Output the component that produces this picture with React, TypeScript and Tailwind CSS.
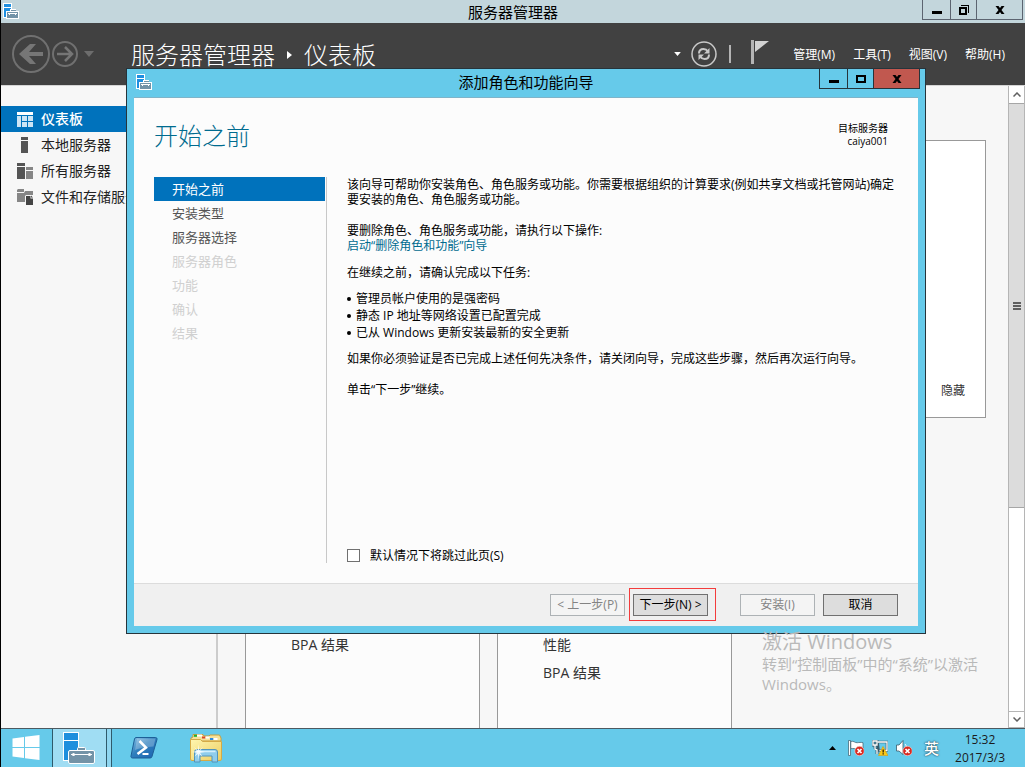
import { useState, type ReactNode } from "react";
import clsx from "clsx";

const nav_items = [
  { label: "仪表板", icon: <DashboardIcon /> },
  { label: "本地服务器", icon: <LocalServerIcon /> },
  { label: "所有服务器", icon: <AllServersIcon /> },
  { label: "文件和存储服务", icon: <StorageIcon /> },
];

const menus = ["管理(M)", "工具(T)", "视图(V)", "帮助(H)"];

const steps = [
  { label: "开始之前", enabled: true },
  { label: "安装类型", enabled: true },
  { label: "服务器选择", enabled: true },
  { label: "服务器角色", enabled: false },
  { label: "功能", enabled: false },
  { label: "确认", enabled: false },
  { label: "结果", enabled: false },
];

const tasks = [
  "管理员帐户使用的是强密码",
  "静态 IP 地址等网络设置已配置完成",
  "已从 Windows 更新安装最新的安全更新",
];

const tiles = [["BPA 结果"], ["性能", "BPA 结果"]];

/* ---------- icons ---------- */

function ManagerIcon() {
  return (
    <svg width="16" height="16" viewBox="0 0 16 16" shapeRendering="crispEdges">
      <rect width="9" height="15" fill="#fff" />
      <rect x="1" y="1" width="7" height="3" fill="#1e8fe0" />
      <rect x="1" y="5" width="7" height="9" fill="#1e8fe0" />
      <path d="M8 6h5v2h3v8H3V8h4V6z" fill="#fff" />
      <path d="M8 7h5v1H8zM4 9h11v6H4z" fill="#7393a7" />
      <path d="M5 10h9v1H5zM6 11h1v1H6zM12 11h1v1h-1z" fill="#fff" />
    </svg>
  );
}

function ManagerIconLarge() {
  return (
    <svg width="32" height="32" viewBox="0 0 32 32">
      <rect x="0.5" y="0.5" width="15" height="28" fill="#1e8fdd" stroke="#fff" />
      <path d="M0 8.5h16" stroke="#fff" />
      <path d="M14.5 18v-1.500a1 1 0 0 1 1-1h6a1 1 0 0 1 1 1V18" fill="#7393a7" stroke="#fff" />
      <rect x="5.500" y="18.500" width="26" height="13" rx="1.500" fill="#7393a7" stroke="#fff" />
      <path d="M8 22.500h21" stroke="#fff" />
      <circle cx="10.500" cy="22.500" r="1.500" fill="#fff" />
      <circle cx="26.500" cy="22.500" r="1.500" fill="#fff" />
    </svg>
  );
}

function DashboardIcon() {
  return (
    <svg width="16" height="15" viewBox="0 0 16 15" shapeRendering="crispEdges">
      <path d="M0 0h16v3H0z" fill="#fff" />
      <path d="M0 4h4v11H0zM5 4h5v5H5zM11 4h5v5h-5zM5 10h5v5H5zM11 10h5v5h-5z" fill="#cde5f5" />
    </svg>
  );
}

function LocalServerIcon() {
  return (
    <svg width="16" height="16" viewBox="0 0 16 16" shapeRendering="crispEdges">
      <path d="M4 0h7v3H4zM4 4h7v12H4z" fill="#555" />
    </svg>
  );
}

function AllServersIcon() {
  return (
    <svg width="16" height="16" viewBox="0 0 16 16" shapeRendering="crispEdges">
      <path d="M0 0h8v3H0zM0 4h8v12H0z" fill="#555" />
      <path d="M9 4h7v3H9zM9 8h7v8H9z" fill="#868686" />
    </svg>
  );
}

function StorageIcon() {
  return (
    <svg width="16" height="16" viewBox="0 0 16 16">
      <path d="M0 1l1-1h6v3H0zM0 4h7l1-2h8v4H9l-1 1v6H0z" fill="#868686" />
      <path d="M9 7h4.500v2.500H16V16H9z" fill="#444" />
      <path d="M14 6.500l2 2h-2z" fill="#444" />
    </svg>
  );
}

function BackIcon() {
  return (
    <svg width="38" height="38" viewBox="0 0 38 38" fill="none">
      <circle cx="19" cy="19" r="18" stroke="#707070" strokeWidth="2" />
      <path d="M18 9h6l-7 8h14v4H17l7 8h-6L7 19z" fill="#767676" />
    </svg>
  );
}

function ForwardIcon() {
  return (
    <svg width="26" height="26" viewBox="0 0 26 26" fill="none">
      <circle cx="13" cy="13" r="12" stroke="#707070" strokeWidth="2" />
      <path d="M5 13h14M13 6l7 7-7 7" stroke="#767676" strokeWidth="2.500" />
    </svg>
  );
}

function RefreshIcon() {
  return (
    <svg width="26" height="26" viewBox="0 0 26 26" fill="none">
      <circle cx="13" cy="13" r="12" stroke="#c8c8c8" strokeWidth="1.500" />
      <path d="M8 12.500c0-3 2-4.500 4.500-4.500 2 0 3.500 1 4.500 2.500M18 13.500c0 3-2 4.500-4.500 4.500-2 0-3.500-1-4.500-2.500" stroke="#c8c8c8" strokeWidth="2" />
      <path d="M18.500 7v5.500H13zM7.500 19v-5.500H13z" fill="#c8c8c8" />
    </svg>
  );
}

function Caret({ className }: { className?: string }) {
  return (
    <svg viewBox="0 0 10 6" className={className} fill="currentColor">
      <path d="M0 0h10L5 6z" />
    </svg>
  );
}

function MinimizeGlyph() {
  return (
    <svg width="10" height="10" viewBox="0 0 10 10" shapeRendering="crispEdges">
      <path d="M0 6h10v3H0z" />
    </svg>
  );
}

function MaximizeGlyph() {
  return (
    <svg width="10" height="10" viewBox="0 0 10 10" shapeRendering="crispEdges">
      <path d="M0 1h10v8H0zM2 3v4h6V3z" fillRule="evenodd" />
    </svg>
  );
}

function RestoreGlyph() {
  return (
    <svg width="10" height="10" viewBox="0 0 10 10" shapeRendering="crispEdges">
      <path d="M0 2h8v8H0zM2 4v4h4V4z" fillRule="evenodd" />
      <path d="M2 0h8v8H9V1H2z" />
    </svg>
  );
}

function CloseGlyph() {
  return (
    <svg width="10" height="10" viewBox="0 0 10 10">
      <path d="M0.500 1h3L5 3l1.500-2h3L6.500 5l3 4h-3L5 7 3.500 9h-3l3-4z" />
    </svg>
  );
}

function StartIcon() {
  return (
    <svg width="28" height="28" viewBox="0 0 28 28" fill="#fff">
      <path d="M0.500 4.500L12 3v10H0.500zM13 2.800L27.500 1v12H13zM0.500 14H12v10L0.500 22.500zM13 14h14.500v12L13 24.200z" />
    </svg>
  );
}

function PowerShellIcon() {
  return (
    <svg width="28" height="24" viewBox="0 0 28 24">
      <defs>
        <linearGradient id="ps" x1="0" y1="0" x2="1" y2="1">
          <stop offset="0" stopColor="#8cc4e8" />
          <stop offset="0.450" stopColor="#2f7fbd" />
          <stop offset="1" stopColor="#1b62b0" />
        </linearGradient>
      </defs>
      <path d="M6 1.500h19.500a1.500 1.500 0 0 1 1.500 2l-5 17a2 2 0 0 1-2 1.500H2.500a1.500 1.500 0 0 1-1.500-2l3.500-17a2 2 0 0 1 1.500-1.500z" fill="url(#ps)" stroke="#1d5f97" />
      <path d="M7 2.500h18.500l-2 8C15 11 10 12 5 14z" fill="#fff" opacity="0.250" />
      <path d="M9.500 5l6.500 6.500L7.500 18" fill="none" stroke="#fff" strokeWidth="2.500" />
      <path d="M12.500 18h6" stroke="#fff" strokeWidth="2" />
    </svg>
  );
}

function ExplorerIcon() {
  return (
    <svg width="32" height="30" viewBox="0 0 32 30">
      <defs>
        <linearGradient id="folder" x1="0" y1="0" x2="1" y2="1">
          <stop offset="0" stopColor="#fff6b0" />
          <stop offset="1" stopColor="#ecce62" />
        </linearGradient>
      </defs>
      <path d="M1 5l2-1V1.500h10l1 1.500h5l1-1h9.500L31 5v3H1z" fill="#f6e29a" stroke="#c79f3c" />
      <path d="M4 1.800h3v2H4z" fill="#1fb02e" />
      <path d="M7 1.500h5v2H7z" fill="#fff" />
      <path d="M12 3.500h3.500v2H12z" fill="#d9482b" />
      <path d="M15.500 3.500h4v2h-4z" fill="#fff" />
      <path d="M20 5h3.500v2H20z" fill="#2b8be0" />
      <path d="M23.500 5h4v2h-4z" fill="#fff" />
      <path d="M0.500 6.500h10l2 2h19V26a1.500 1.500 0 0 1-1.500 1.500H2A1.500 1.500 0 0 1 .500 26z" fill="url(#folder)" stroke="#d5aa46" />
      <path d="M4.500 29V19a2.500 2.500 0 0 1 2.500-2.500h18a2.500 2.500 0 0 1 2.500 2.500v10h-5.500v-6h-12v6z" fill="#8fcdec" stroke="#5294ba" />
      <path d="M6.500 18.500h19" stroke="#d2effc" strokeWidth="1.500" />
      <path d="M8.500 11l.500 6.500L13 14l-3 4 5 1-5 .800 2.500 3.700-3.500-2.500L8.500 27l-.700-6-3.300 2.500 2.300-3.700L2 19l4.800-1L4 14l3.800 3.500z" fill="#fff" opacity="0.850" />
    </svg>
  );
}

function ErrorBadge() {
  return (
    <>
      <circle cx="11.500" cy="11" r="4.700" fill="#d8281f" stroke="#fbd5d0" strokeWidth="0.600" />
      <path d="M9.500 9l4 4M13.500 9l-4 4" stroke="#fff" strokeWidth="1.700" />
    </>
  );
}

function TrayFlagIcon() {
  return (
    <svg width="16" height="16" viewBox="0 0 16 16">
      <path d="M0.500 0.500h2v15h-2z" fill="#fff" stroke="#3a5b6b" strokeWidth="0.700" />
      <path d="M2.800 1.500c3-1 4 1.500 6.500 1.200 2-.200 3.500-.500 5.700 0V9c-3-.800-4 .500-6 .200-2-.300-3.500-1.200-6.200-.500z" fill="#fff" stroke="#3a5b6b" strokeWidth="0.700" />
      <ErrorBadge />
    </svg>
  );
}

function TrayNetworkIcon() {
  return (
    <svg width="16" height="16" viewBox="0 0 16 16" fill="none">
      <path d="M5.500 2h9.500v8.500H6.500z" fill="#66caea" stroke="#3a5b6b" strokeWidth="2.600" />
      <path d="M1 1h4v4H1zM3 5v3l2 2v4" stroke="#3a5b6b" strokeWidth="2.800" />
      <path d="M5.500 2h9.500v8.500H7.500M8 13h3" stroke="#fff" strokeWidth="1.300" />
      <path d="M1 1h4v4H1zM3 5v4l2 1v4" stroke="#fff" strokeWidth="1.300" />
      <path d="M11 6.500L16 15.500H6.500z" fill="#fbc916" stroke="#d99a08" strokeWidth="0.600" />
      <path d="M11.200 9.500v3M11.200 13.300v1.200" stroke="#3a2c00" strokeWidth="1.400" />
    </svg>
  );
}

function TraySpeakerIcon() {
  return (
    <svg width="16" height="16" viewBox="0 0 16 16">
      <path d="M0.500 5h2.500l4-4.500v14L3 11H0.500z" fill="#fff" stroke="#3a5b6b" strokeWidth="0.800" />
      <path d="M9 4c1 1 1.200 2 1.200 3" stroke="#fff" fill="none" />
      <ErrorBadge />
    </svg>
  );
}

/* ---------- shared pieces ---------- */

function CaptionButton({
  label,
  className,
  children,
}: {
  label: string;
  className?: string;
  children: ReactNode;
}) {
  return (
    <button
      type="button"
      aria-label={label}
      className={clsx("flex items-center justify-center border-l", className)}
    >
      {children}
    </button>
  );
}

function DialogButton({
  children,
  disabled,
}: {
  children: ReactNode;
  disabled?: boolean;
}) {
  return (
    <button
      type="button"
      disabled={disabled}
      className={clsx(
        "h-[22px] w-[75px] border text-xs leading-5 whitespace-nowrap",
        disabled
          ? "border-[#adb2b5] bg-[#f4f4f4] text-[#838383]"
          : "border-[#707070] bg-[#dddddd] text-black"
      )}
    >
      {children}
    </button>
  );
}

/* ---------- main window ---------- */

function TitleBar() {
  return (
    <div className="relative flex h-[23px] shrink-0 items-center justify-center bg-[#c3d6dc]">
      <span className="absolute left-0.5 top-[3px]">
        <ManagerIcon />
      </span>
      <h1 className="text-[15px] leading-5 text-black">服务器管理器</h1>
      <div className="absolute right-0.5 top-0 flex h-5 border-r border-b border-[#5c6470]">
        <CaptionButton label="最小化" className="w-7 border-[#5c6470]">
          <MinimizeGlyph />
        </CaptionButton>
        <CaptionButton label="还原" className="w-[26px] border-[#5c6470]">
          <RestoreGlyph />
        </CaptionButton>
        <CaptionButton label="关闭" className="w-[46px] border-[#5c6470]">
          <CloseGlyph />
        </CaptionButton>
      </div>
    </div>
  );
}

function Header() {
  return (
    <header className="flex h-[62px] shrink-0 items-center bg-[#414141] pr-5 pl-[11px] text-white">
      <button type="button" aria-label="后退">
        <BackIcon />
      </button>
      <button type="button" aria-label="前进" className="ml-0.5">
        <ForwardIcon />
      </button>
      <Caret className="ml-1.5 h-1.5 w-2.5 text-[#6d6d6d]" />
      <h2 className="ml-[37px] flex items-center pt-0.5 text-2xl leading-8 font-light whitespace-nowrap">
        服务器管理器
        <svg width="5" height="8" viewBox="0 0 5 8" className="mx-3" fill="#fff">
          <path d="M0 0l5 4-5 4z" />
        </svg>
        仪表板
      </h2>
      <div className="ml-auto flex items-center">
        <Caret className="h-1 w-[7px]" />
        <button type="button" aria-label="刷新" className="ml-2.5">
          <RefreshIcon />
        </button>
        <span className="ml-3 h-[18px] w-0.5 bg-[#b4b4b4]" />
        <button type="button" aria-label="通知" className="mb-1 ml-5">
          <svg width="18" height="24" viewBox="0 0 18 24">
            <path d="M0 0h3v24H0z" fill="#b4b4b4" />
            <path d="M4 1h14L4 12z" fill="#d2d2d2" />
          </svg>
        </button>
        <nav className="ml-6 flex gap-[18px] pt-0.5 text-xs leading-4">
          {menus.map((menu) => (
            <button type="button" key={menu} className="whitespace-nowrap">
              {menu}
            </button>
          ))}
        </nav>
      </div>
    </header>
  );
}

function Sidebar() {
  return (
    <nav className="w-[217px] shrink-0 border-r-2 border-[#cccccc] pt-5">
      <ul>
        {nav_items.map((item, i) => (
          <li key={item.label}>
            <a
              href="#"
              className={clsx(
                "flex h-[26px] items-center gap-2 pl-4 text-sm whitespace-nowrap",
                i === 0
                  ? "bg-[#0072bc] font-medium text-white"
                  : "text-[#222222]"
              )}
            >
              {item.icon}
              {item.label}
            </a>
          </li>
        ))}
      </ul>
    </nav>
  );
}

function Scrollbar() {
  return (
    <div className="flex w-[17px] shrink-0 flex-col border-x border-[#b5b5b5] bg-white">
      <button
        type="button"
        aria-label="向上滚动"
        className="flex h-[17px] items-center justify-center"
      >
        <svg width="8" height="5" viewBox="0 0 8 5" fill="none" stroke="#606060" strokeWidth="1.500">
          <path d="M.500 4.500L4 1l3.500 3.500" />
        </svg>
      </button>
      <div className="flex-1">
        <div className="flex h-2/3 flex-col items-center justify-center gap-px border-y border-[#a6a6a6] bg-[#dcdcdc]">
          <span className="h-0.5 w-2 bg-[#606060]" />
          <span className="h-0.5 w-2 bg-[#606060]" />
          <span className="h-0.5 w-2 bg-[#606060]" />
        </div>
      </div>
      <button
        type="button"
        aria-label="向下滚动"
        className="flex h-[17px] items-center justify-center border-y border-[#b5b5b5]"
      >
        <svg width="8" height="5" viewBox="0 0 8 5" fill="none" stroke="#606060" strokeWidth="1.500">
          <path d="M.500.500L4 4 7.500.500" />
        </svg>
      </button>
    </div>
  );
}

function Dashboard() {
  return (
    <main className="flex min-w-0 flex-1 flex-col overflow-hidden pt-[54px] pr-[22px] pl-[27px]">
      <section className="flex h-[278px] shrink-0 items-end justify-end border border-[#999999] bg-white px-5 pb-[18px]">
        <button type="button" className="text-xs text-[#333333]">
          隐藏
        </button>
      </section>
      <div className="mt-[200px] flex flex-1 gap-[17px]">
        {tiles.map((rows, i) => (
          <section
            key={i}
            className="w-[235px] border-x border-t border-[#999999] bg-[#fcfcfc] pt-3 pl-[45px] text-sm leading-7 text-[#333333]"
          >
            {rows.map((row) => (
              <p key={row}>{row}</p>
            ))}
          </section>
        ))}
      </div>
    </main>
  );
}

/* ---------- wizard ---------- */

function Wizard() {
  const [skip, setSkip] = useState(false);
  return (
    <div
      role="dialog"
      aria-labelledby="wizard-title"
      className="absolute top-[68px] left-[125px] flex h-[566px] w-[800px] flex-col border border-[#26343b] bg-[#66caea] px-[7px] pb-[7px]"
    >
      <div className="relative flex h-[29px] shrink-0 items-center justify-center border-b border-[#7fb4c9] pb-0.5">
        <span className="absolute left-0.5 top-[5px]">
          <ManagerIcon />
        </span>
        <h2 id="wizard-title" className="text-[15px] leading-5 text-black">
          添加角色和功能向导
        </h2>
        <div className="absolute -top-px -right-0.5 flex h-[21px] border border-l-0 border-[#26343b]">
          <CaptionButton label="最小化" className="w-7 border-[#26343b]">
            <MinimizeGlyph />
          </CaptionButton>
          <CaptionButton label="最大化" className="w-[26px] border-[#26343b]">
            <MaximizeGlyph />
          </CaptionButton>
          <CaptionButton
            label="关闭"
            className="w-[46px] border-[#26343b] bg-[#c1584f]"
          >
            <CloseGlyph />
          </CaptionButton>
        </div>
      </div>

      <div className="flex flex-1 flex-col bg-[#fcfcfc]">
        <div className="flex h-[79px] shrink-0 items-start justify-between px-5 pt-6">
          <h3 className="text-2xl leading-7 font-light text-[#006b8f]">
            开始之前
          </h3>
          <p className="pr-2.5 text-right text-[10px] leading-[13px] text-black">
            目标服务器
            <br />
            caiya001
          </p>
        </div>

        <div className="flex flex-1 pb-5 pl-5">
          <ol className="w-[173px] shrink-0 border-r border-[#c8c8c8] pr-px">
            {steps.map((step, i) => (
              <li
                key={step.label}
                aria-current={i === 0 ? "step" : undefined}
                className={clsx(
                  "h-6 pl-[18px] text-[13px] leading-6",
                  i === 0 && "bg-[#0072bc] text-white",
                  i > 0 && (step.enabled ? "text-[#555555]" : "text-[#d0d0d0]")
                )}
              >
                {step.label}
              </li>
            ))}
          </ol>

          <div className="flex flex-1 flex-col pr-5 pl-5 text-xs leading-[15px] text-black">
            <p>
              该向导可帮助你安装角色、角色服务或功能。你需要根据组织的计算要求(例如共享文档或托管网站)确定要安装的角色、角色服务或功能。
            </p>
            <p className="mt-4">
              要删除角色、角色服务或功能，请执行以下操作:
              <br />
              <a href="#" className="text-[#006b8f]">
                启动“删除角色和功能”向导
              </a>
            </p>
            <p className="mt-3">在继续之前，请确认完成以下任务:</p>
            <ul className="mt-2.5">
              {tasks.map((task) => (
                <li key={task} className="flex items-center gap-[5px] leading-[17px]">
                  <span className="h-1 w-1 rounded-full bg-black" />
                  {task}
                </li>
              ))}
            </ul>
            <p className="mt-2.5">
              如果你必须验证是否已完成上述任何先决条件，请关闭向导，完成这些步骤，然后再次运行向导。
            </p>
            <p className="mt-4">单击“下一步”继续。</p>
            <label className="mt-auto flex items-center gap-2.5">
              <input
                type="checkbox"
                checked={skip}
                onChange={(e) => setSkip(e.target.checked)}
                className="h-[13px] w-[13px] appearance-none border border-[#707070] bg-white checked:bg-[#0072bc]"
              />
              默认情况下将跳过此页(S)
            </label>
          </div>
        </div>

        <div className="flex h-[43px] shrink-0 items-center justify-end border-t border-[#dcdcdc] bg-[#f0f0f0] px-5">
          <DialogButton disabled>&lt; 上一步(P)</DialogButton>
          <div className="relative mr-8 ml-2 flex">
            <DialogButton>下一步(N) &gt;</DialogButton>
            <span className="pointer-events-none absolute -top-1.5 -right-2 -bottom-[5px] -left-1 border border-[#f33c3c]" />
          </div>
          <DialogButton disabled>安装(I)</DialogButton>
          <div className="ml-2 flex">
            <DialogButton>取消</DialogButton>
          </div>
        </div>
      </div>
    </div>
  );
}

/* ---------- desktop ---------- */

function ActivationNotice() {
  return (
    <div className="pointer-events-none absolute right-[47px] bottom-[73px] text-[15px] leading-5 text-[#b9b9b9]">
      <p className="text-xl leading-6">激活 Windows</p>
      <p>
        转到“控制面板”中的“系统”以激活
        <br />
        Windows。
      </p>
    </div>
  );
}

function Taskbar() {
  return (
    <footer className="flex h-[39px] shrink-0 items-stretch border-t border-[#4d5960] bg-[#66caea]">
      <button type="button" aria-label="开始" className="w-[51px] pl-[11px]">
        <StartIcon />
      </button>
      <button
        type="button"
        aria-label="服务器管理器"
        className="flex w-[55px] items-center border-x border-[#2f5a6b] bg-[#a0ddf3] pl-2.5"
      >
        <ManagerIconLarge />
      </button>
      <span className="w-[5px] border-r border-[#2f5a6b] bg-[#8fd6f0]" />
      <button type="button" aria-label="PowerShell" className="ml-[18px]">
        <PowerShellIcon />
      </button>
      <button type="button" aria-label="文件资源管理器" className="ml-8">
        <ExplorerIcon />
      </button>
      <div className="ml-auto flex items-center gap-2 pr-5 text-[#1b1b1b]">
        <svg width="7" height="4" viewBox="0 0 7 4" className="mr-1">
          <path d="M3.500 0L7 4H0z" />
        </svg>
        <TrayFlagIcon />
        <TrayNetworkIcon />
        <TraySpeakerIcon />
        <button type="button" className="ml-1 text-[15px] leading-5 font-medium text-white [text-shadow:0_0_2px_#1d4454,0_0_1px_#1d4454]">
          英
        </button>
        <p className="ml-2 pt-0.5 text-center text-xs leading-[18px]">
          15:32
          <br />
          2017/3/3
        </p>
      </div>
    </footer>
  );
}

export default function App() {
  return (
    <div
      lang="zh-CN"
      className="relative flex h-screen flex-col overflow-hidden border-l border-black bg-[#f7f7f7] font-['Open_Sans','Noto_Sans_CJK_SC',sans-serif]"
    >
      <TitleBar />
      <Header />
      <div className="flex min-h-0 flex-1 border-t border-[#d5d5d5]">
        <Sidebar />
        <Dashboard />
        <Scrollbar />
      </div>
      <Taskbar />
      <Wizard />
      <ActivationNotice />
    </div>
  );
}
